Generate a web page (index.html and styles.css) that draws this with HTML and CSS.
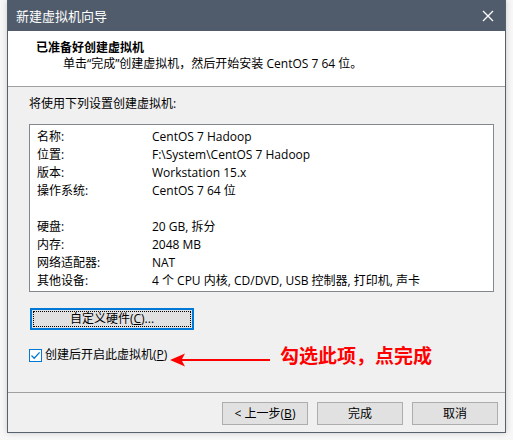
FILE: index.html
```html
<!DOCTYPE html>
<html lang="zh-CN">
<head>
<meta charset="utf-8">
<link rel="stylesheet" href="styles.css">
</head>
<body>
<div class="window">
  <div class="titlebar">
    <span class="title">新建虚拟机向导</span>
    <svg class="close" width="12" height="12" viewBox="0 0 12 12"><path d="M1 1L11 11M11 1L1 11" stroke="#fff" stroke-width="1.3"/></svg>
  </div>
  <div class="header">
    <div class="h-title">已准备好创建虚拟机</div>
    <div class="h-sub">单击“完成”创建虚拟机，然后开始安装 CentOS 7 64 位。</div>
  </div>
  <div class="body">
    <div class="intro">将使用下列设置创建虚拟机:</div>
    <div class="listbox">
      <div class="row"><span class="k">名称:</span><span class="v">CentOS 7 Hadoop</span></div>
      <div class="row"><span class="k">位置:</span><span class="v">F:\System\CentOS 7 Hadoop</span></div>
      <div class="row"><span class="k">版本:</span><span class="v">Workstation 15.x</span></div>
      <div class="row"><span class="k">操作系统:</span><span class="v">CentOS 7 64 位</span></div>
      <div class="row"></div>
      <div class="row"><span class="k">硬盘:</span><span class="v">20 GB, 拆分</span></div>
      <div class="row"><span class="k">内存:</span><span class="v">2048 MB</span></div>
      <div class="row"><span class="k">网络适配器:</span><span class="v">NAT</span></div>
      <div class="row"><span class="k">其他设备:</span><span class="v">4 个 CPU 内核, CD/DVD, USB 控制器, 打印机, 声卡</span></div>
    </div>
    <div class="custom-wrap">
      <button class="btn custom"><span class="focus">自定义硬件(<u>C</u>)...</span></button>
    </div>
    <div class="check-row">
      <span class="checkbox"><svg width="11" height="11" viewBox="0 0 11 11"><path d="M1.5 5.5L4.2 8.2L9.6 2.4" fill="none" stroke="#0078d7" stroke-width="1.3"/></svg></span>
      <span class="check-label">创建后开启此虚拟机(<u>P</u>)</span>
      <div class="annot">
        <svg class="arrow" width="100" height="16" viewBox="0 0 100 16"><path d="M0 8L15 1.5L12 7H100V9H12L15 14.5Z" fill="#f00"/></svg>
        <span class="annot-text">勾选此项，点完成</span>
      </div>
    </div>
  </div>
  <div class="footer">
    <button class="btn">&lt; 上一步(<u>B</u>)</button>
    <button class="btn">完成</button>
    <button class="btn">取消</button>
  </div>
</div>
</body>
</html>
```
FILE: styles.css
```css
html, body {
  margin: 0;
  padding: 0;
}
body {
  width: 513px;
  height: 440px;
  background: #f7f7f7;
  font-family: "Open Sans", "Noto Sans CJK SC", sans-serif;
  font-size: 12px;
  color: #000;
  overflow: hidden;
}
.window {
  margin-left: 7px;
  width: 497px;
  height: 432px;
  border: 1px solid #56606e;
  border-top: none;
  background: #f0f0f0;
  display: flex;
  flex-direction: column;
  box-shadow: 0 0 6px rgba(0,0,0,0.18);
}
.titlebar {
  height: 31px;
  background: #505c6b;
  display: flex;
  align-items: center;
  justify-content: space-between;
  padding: 0 11px 0 8px;
  color: #fff;
}
.title {
  font-size: 13px;
  line-height: 16px;
}
.close {
  display: block;
}
.header {
  background: #fff;
  border-bottom: 1px solid #a0a0a0;
  padding-left: 28px;
  display: flex;
  flex-direction: column;
  padding-top: 9px;
  box-sizing: border-box;
  height: 56px;
}
.h-title {
  font-weight: bold;
  font-size: 12px;
  line-height: 16px;
}
.h-sub {
  padding-left: 27px;
  line-height: 16px;
}
.body {
  flex: 1;
  padding: 8px 11px 0 21px;
  position: relative;
  border-bottom: 1px solid #a0a0a0;
}
.intro {
  line-height: 18px;
}
.listbox {
  margin-top: 11px;
  background: #fff;
  border: 1px solid #828790;
  padding: 3px 0 0 7px;
  box-sizing: border-box;
  height: 168px;
  width: 465px;
}
.row {
  display: flex;
  height: 18px;
  line-height: 18px;
  white-space: nowrap;
}
.k {
  width: 115px;
  flex: none;
}
.custom-wrap {
  margin-top: 16px;
  padding-left: 1px;
}
.btn {
  font-family: inherit;
  font-size: 12px;
  color: #000;
  background: #e1e1e1;
  border: 1px solid #adadad;
  height: 23px;
  padding: 0;
  display: flex;
  align-items: center;
  justify-content: center;
  line-height: 16px;
}
.btn u {
  text-decoration: underline;
}
.custom {
  width: 164px;
  height: 22px;
  border: 2px solid #0078d7;
}
.focus {
  width: 156px;
  height: 14px;
  border: 1px dotted #000;
  display: flex;
  align-items: center;
  justify-content: center;
}
.check-row {
  margin-top: 18px;
  display: flex;
  align-items: center;
  height: 14px;
  position: relative;
}
.checkbox {
  width: 11px;
  height: 11px;
  border: 1px solid #0078d7;
  background: #fff;
  display: flex;
}
.check-label {
  margin-left: 3px;
  line-height: 16px;
}
.annot {
  position: absolute;
  left: 141px;
  top: -6px;
  display: flex;
  align-items: center;
}
.arrow {
  margin-top: 10px;
}
.annot-text {
  margin-left: 10px;
  color: #f00;
  font-weight: bold;
  font-size: 19px;
  line-height: 22px;
  font-family: "Noto Sans CJK SC", sans-serif;
}
.footer {
  height: 39px;
  display: flex;
  justify-content: flex-end;
  align-items: flex-start;
  gap: 9px;
  padding: 9px 7px 0 0;
  box-sizing: border-box;
}
.footer .btn {
  width: 86px;
}
```
